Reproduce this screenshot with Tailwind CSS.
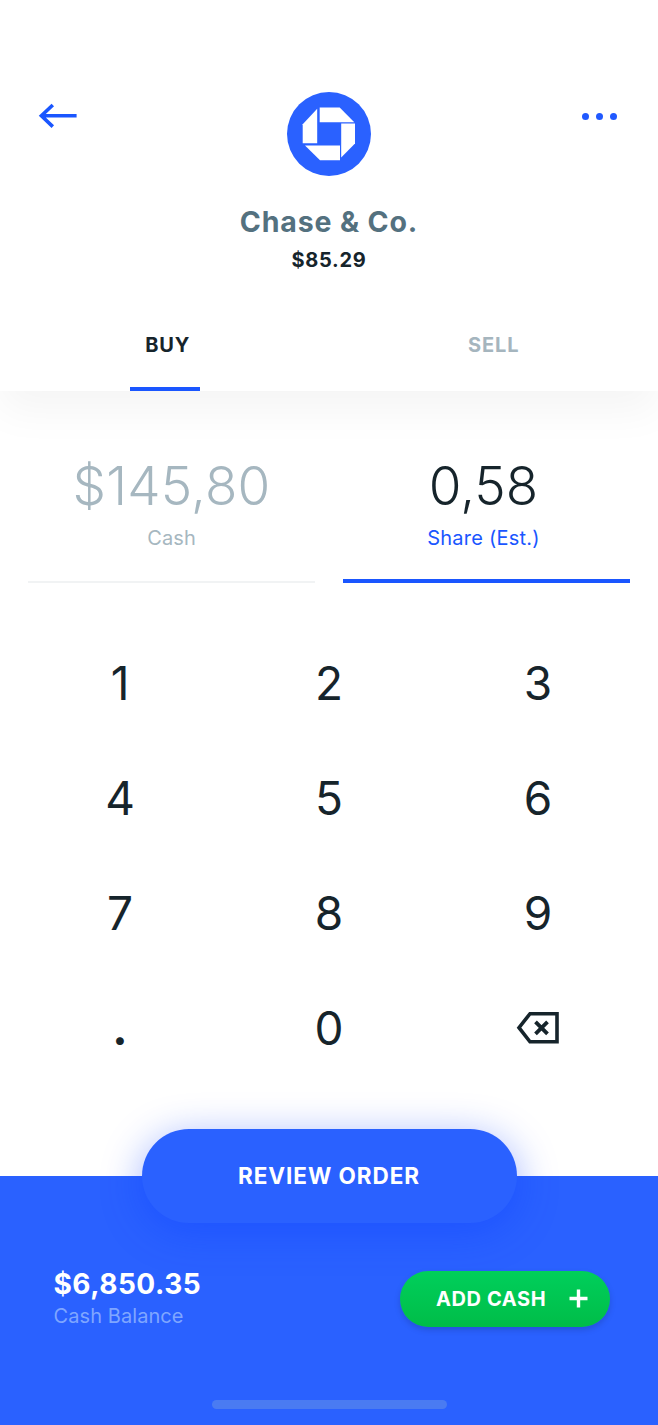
<!DOCTYPE html>
<html lang="en">
<head>
<meta charset="utf-8">
<title>Buy shares</title>
<script src="https://cdn.jsdelivr.net/npm/@tailwindcss/browser@4"></script>
</head>
<body class="bg-white">
<div class="flex h-[1425px] w-[658px] flex-col overflow-hidden font-[Inter,sans-serif] text-[#16242b]">
  <header class="flex h-[391px] shrink-0 flex-col bg-white pt-[92px] shadow-[0_20px_40px_rgba(0,0,0,0.045)]">
    <div class="flex items-start justify-between pr-[39px] pl-[38px]">
      <button class="mt-[11px] w-[39px]" aria-label="Back">
        <svg class="block" width="40" height="26" viewBox="0 0 40 26" fill="none" stroke="#1a56ff" stroke-width="3.6"><path d="M38.600 12.800H4M14.800 2L3.400 12.800L14.800 23.600"/></svg>
      </button>
      <svg class="block" width="84" height="84" viewBox="0 0 84 84"><circle cx="42" cy="42" r="42" fill="#2a61ff"/><g fill="#fff"><path d="M32.700 15.600H52.700L67.300 30.300H32.700z"/><path d="M68 31.500V51.500L54.200 65.500V31.500z"/><path d="M53 68.200H33L18 53.500H53z"/><path d="M15.700 51.300V32.200L30.200 16.800V51.300z"/></g></svg>
      <button class="mt-[20.500px] flex w-[37.500px] gap-[7px] pl-[0.500px]" aria-label="More">
        <span class="size-[7px] shrink-0 rounded-full bg-[#2159ff]"></span><span class="size-[7px] shrink-0 rounded-full bg-[#2159ff]"></span><span class="size-[7px] shrink-0 rounded-full bg-[#2159ff]"></span>
      </button>
    </div>
    <h1 class="mt-[26px] text-center text-[28.500px] leading-[40px] font-bold tracking-[0.850px] text-[#54717f]">Chase &amp; Co.</h1>
    <p class="mt-[5px] text-center text-[20px] leading-[26px] font-bold tracking-[0.7px]">$85.29</p>
    <nav class="mt-auto grid grid-cols-2 pl-[1px] text-[20px] font-bold tracking-[0.9px]">
      <a class="flex justify-center"><span class="flex h-[60px] w-[70px] justify-center border-b-4 border-[#1a56ff] pl-[5px] leading-[28px]">BUY</span></a>
      <a class="flex justify-center"><span class="flex h-[60px] w-[70px] justify-center leading-[28px] text-[#a5b5be]">SELL</span></a>
    </nav>
  </header>

  <section class="mx-[28px] mt-[60px] grid h-[132px] shrink-0 grid-cols-2 gap-[28px] text-center">
    <div class="flex flex-col border-b-2 border-[#f1f3f4] text-[#a6b7c0]">
      <span class="text-[53px] leading-[70px] font-light tracking-[0.2px]">$145,80</span>
      <span class="text-[20px] leading-[34px] tracking-[0.1px]">Cash</span>
    </div>
    <div class="flex flex-col border-b-4 border-[#1a56ff]">
      <span class="pr-[6px] text-[53px] leading-[70px] font-light">0,58</span>
      <span class="pr-[6px] text-[20px] leading-[34px] tracking-[0.220px] text-[#1a56ff]">Share (Est.)</span>
    </div>
  </section>

  <main class="mx-[15.500px] mt-[42.500px] grid h-[460px] shrink-0 grid-cols-3 grid-rows-4 text-center text-[46px] leading-[115px]">
    <span>1</span><span>2</span><span>3</span>
    <span>4</span><span>5</span><span>6</span>
    <span>7</span><span>8</span><span>9</span>
    <span class="font-bold">.</span><span>0</span>
    <span class="flex items-center justify-center"><svg class="block" width="44" height="34" viewBox="0 0 44 34" fill="none" stroke="#16242b"><path d="M14 2.700H41V30.800H14L3 16.700z" stroke-width="3.600"/><path d="M19.500 10.800L31.500 22.800M31.500 10.800L19.500 22.800" stroke-width="3.800"/></svg></span>
  </main>

  <footer class="mt-auto flex h-[249px] shrink-0 flex-col items-center bg-[#2a61ff] text-white">
    <button class="-mt-[47px] h-[93.500px] w-[375px] shrink-0 rounded-full bg-[#2a61ff] text-[22.500px] font-bold tracking-[0.950px] shadow-[0_8px_40px_rgba(10,60,255,0.4)]">REVIEW ORDER</button>
    <div class="mt-[43px] flex w-full items-start justify-between pr-[48px] pl-[53.500px]">
      <div class="flex flex-col">
        <span class="text-[28px] leading-[36px] font-bold tracking-[0.5px]">$6,850.35</span>
        <span class="text-[20px] leading-[28px] tracking-[0.080px] text-[#7fa6ff]">Cash Balance</span>
      </div>
      <button class="mt-[5px] flex h-[56px] w-[210px] items-center justify-between rounded-full bg-linear-to-b from-[#00cf5b] to-[#00bd48] pr-[22px] pl-[36px] text-[20px] font-bold tracking-[0.6px] shadow-[0_3px_6px_rgba(0,0,0,0.15)]">ADD CASH
        <svg class="block" width="19" height="19" viewBox="0 0 19 19" stroke="#fff" stroke-width="3.400"><path d="M9.500 0.500V18.500M0.500 9.500H18.500"/></svg>
      </button>
    </div>
    <div class="mt-auto mb-[16px] h-[9px] w-[235px] shrink-0 rounded-full bg-[#4a7bf2]"></div>
  </footer>
</div>
</body>
</html>
